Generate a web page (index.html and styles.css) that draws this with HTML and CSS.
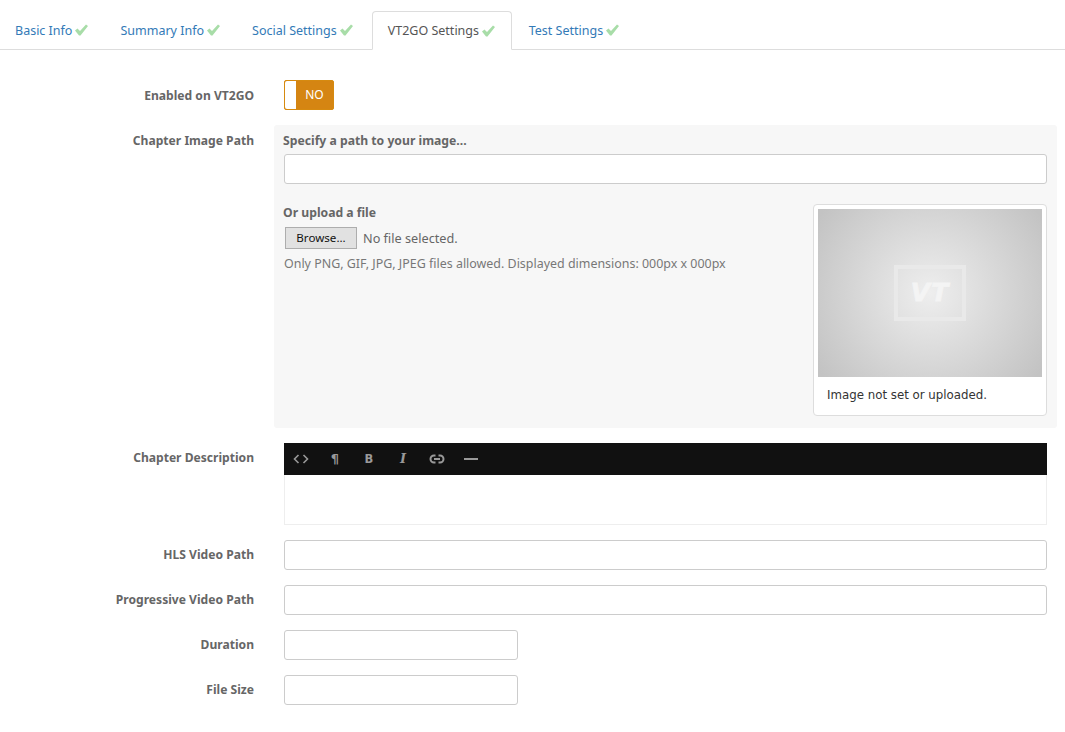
FILE: index.html
```html
<!DOCTYPE html>
<html lang="en">
<head>
<meta charset="utf-8">
<title>VT2GO Settings</title>
<link rel="stylesheet" href="styles.css">
</head>
<body>
<ul class="tabs">
  <li class="tab"><a href="#">Basic Info</a><svg class="check" viewBox="0 0 13 12"><path d="M0 6.500l2.500-2 2.500 2.500L11 .5l2 1.500-7.500 9.500h-1.500z"/></svg></li>
  <li class="tab"><a href="#">Summary Info</a><svg class="check" viewBox="0 0 13 12"><path d="M0 6.500l2.500-2 2.500 2.500L11 .5l2 1.500-7.500 9.500h-1.500z"/></svg></li>
  <li class="tab"><a href="#">Social Settings</a><svg class="check" viewBox="0 0 13 12"><path d="M0 6.500l2.500-2 2.500 2.500L11 .5l2 1.500-7.500 9.500h-1.500z"/></svg></li>
  <li class="tab active"><a href="#">VT2GO Settings</a><svg class="check" viewBox="0 0 13 12"><path d="M0 6.500l2.500-2 2.500 2.500L11 .5l2 1.500-7.500 9.500h-1.500z"/></svg></li>
  <li class="tab"><a href="#">Test Settings</a><svg class="check" viewBox="0 0 13 12"><path d="M0 6.500l2.500-2 2.500 2.500L11 .5l2 1.500-7.500 9.500h-1.500z"/></svg></li>
</ul>
<form class="form">
  <div class="row row-shift">
    <label class="label">Enabled on VT2GO</label>
    <div class="toggle"><span class="knob"></span><span class="toggle-text">NO</span></div>
  </div>
  <div class="row row-shift">
    <label class="label">Chapter Image Path</label>
    <div class="panel">
      <div class="panel-title">Specify a path to your image...</div>
      <input class="input" type="text">
      <div class="upload">
        <div class="upload-left">
          <div class="panel-title">Or upload a file</div>
          <div class="file"><button type="button" class="browse">Browse...</button><span>No file selected.</span></div>
          <p class="help">Only PNG, GIF, JPG, JPEG files allowed. Displayed dimensions: 000px x 000px</p>
        </div>
        <div class="thumb">
          <div class="thumb-image"><div class="logo"><span>VT</span></div></div>
          <div class="caption">Image not set or uploaded.</div>
        </div>
      </div>
    </div>
  </div>
  <div class="row">
    <label class="label">Chapter Description</label>
    <div class="editor">
      <div class="toolbar">
        <svg class="tool" viewBox="0 0 16 16"><path class="ln" d="M5.500 4L1.500 8l4 4M10.500 4l4 4-4 4"/></svg>
        <span class="tool glyph">¶</span>
        <span class="tool glyph glyph-b">B</span>
        <span class="tool glyph ital">I</span>
        <svg class="tool" viewBox="0 0 16 16"><path class="ln ln-thick" d="M6.500 4.500H5a3.500 3.500 0 0 0 0 7h1.500M9.500 4.500H11a3.500 3.500 0 0 1 0 7H9.500M5 8h6"/></svg>
        <svg class="tool" viewBox="0 0 16 16"><path class="ln ln-thick" d="M1 8h14"/></svg>
      </div>
      <div class="editor-body"></div>
    </div>
  </div>
  <div class="row"><label class="label">HLS Video Path</label><input class="input" type="text"></div>
  <div class="row"><label class="label">Progressive Video Path</label><input class="input" type="text"></div>
  <div class="row"><label class="label">Duration</label><input class="input short" type="text"></div>
  <div class="row"><label class="label">File Size</label><input class="input short" type="text"></div>
</form>
</body>
</html>
```
FILE: styles.css
```css
* { box-sizing: border-box; }
html, body { margin: 0; padding: 0; background: #fff; }
body {
  font-family: "Noto Sans", "DejaVu Sans", sans-serif;
  font-size: 13px;
  color: #666;
  overflow: hidden;
}
.tabs {
  display: flex;
  list-style: none;
  margin: 0;
  padding: 11px 0 0;
  height: 50px;
  border-bottom: 1px solid #ddd;
}
.tab {
  display: flex;
  align-items: center;
  gap: 3px;
  height: 38px;
  padding: 0 0 0 15px;
  margin-right: 17px;
  font-size: 12.500px;
}
.tab a { color: #337ab7; text-decoration: none; }
.tab.active {
  height: 39px;
  padding: 0 15px 0 15px;
  width: 140px;
  margin: 0 2px 0 2px;
  background: #fff;
  border: 1px solid #ddd;
  border-bottom-color: #fff;
  border-radius: 4px 4px 0 0;
}
.tab.active a { color: #555; }
.check { width: 13px; height: 12px; fill: #a8dda8; }
.form { padding-top: 30px; }
.row {
  display: grid;
  grid-template-columns: 254px 1fr;
  column-gap: 30px;
  padding-right: 18px;
  margin-bottom: 15px;
}
.label {
  font-weight: 700;
  font-size: 12.100px;
  color: #666;
  text-align: right;
  line-height: 30px;
}
.row-shift .label { line-height: 32px; height: 30px; }
.toggle {
  display: flex;
  width: 50px;
  height: 30px;
  border: 1px solid #d68a10;
  border-radius: 2px;
  background: #d58512;
}
.knob { width: 11px; background: #fff; border-radius: 2px 0 0 2px; }
.toggle-text { flex: 1; text-align: center; color: #fff; font-size: 12px; line-height: 28px; }
.input {
  display: block;
  width: 100%;
  height: 30px;
  border: 1px solid #ccc;
  border-radius: 3px;
  background: #fff;
}
.input.short { width: 234px; }
.panel {
  margin: 0 -10px;
  padding: 8px 10px 11px;
  height: 303px;
  background: #f7f7f7;
  border-radius: 3px;
}
.panel-title {
  font-weight: 700;
  font-size: 12.200px;
  line-height: 16px;
  color: #666;
  margin-bottom: 5px;
  margin-left: -1px;
}
.upload {
  display: flex;
  justify-content: space-between;
  margin-top: 20px;
}
.upload-left { padding-top: 1px; }
.file {
  display: flex;
  align-items: center;
  gap: 6px;
  margin: 6px 0 0 1px;
  height: 21px;
  font-size: 12.700px;
  color: #666;
}
.browse {
  width: 72px;
  height: 22px;
  padding: 0;
  background: #e1e1e1;
  border: 1px solid #adadad;
  color: #111;
  font: 11.600px "Noto Sans", sans-serif;
}
.help { margin: 7px 0 0; font-size: 12.450px; line-height: 18px; color: #777; }
.thumb {
  width: 234px;
  height: 212px;
  background: #fff;
  border: 1px solid #ddd;
  border-radius: 4px;
  padding: 4px 4px 3px;
}
.thumb-image {
  display: flex;
  align-items: center;
  justify-content: center;
  height: 168px;
  background: radial-gradient(circle 135px at center, #eeeeee 0%, #c3c3c3 100%);
}
.logo {
  display: flex;
  align-items: center;
  justify-content: center;
  width: 72px;
  height: 56px;
  border: 4px solid #e9e9e9;
  margin-top: -1px;
}
.logo span {
  font: italic 700 25px "DejaVu Sans", sans-serif;
  letter-spacing: 1px;
  color: #f4f4f4;
  -webkit-text-stroke: 0.800px #f4f4f4;
}
.caption {
  padding: 9px 9px 0;
  font: 11.800px/18px "DejaVu Sans", sans-serif;
  color: #333;
}
.toolbar {
  display: flex;
  align-items: center;
  gap: 18px;
  padding: 0 9px;
  height: 32px;
  background: #111;
}
.tool { width: 16px; height: 16px; color: #999; }
.ln { fill: none; stroke: #999; stroke-width: 1.600; }
.ln-thick { stroke-width: 2; }
.glyph {
  text-align: center;
  font: 700 13px/16px "DejaVu Sans", sans-serif;
}
.glyph-b { font-size: 11.500px; }
.ital { font: italic 700 13px/16px "DejaVu Serif", serif; }
.editor-body { height: 50px; border: 1px solid #eee; border-top: 0; background: #fff; }
```
